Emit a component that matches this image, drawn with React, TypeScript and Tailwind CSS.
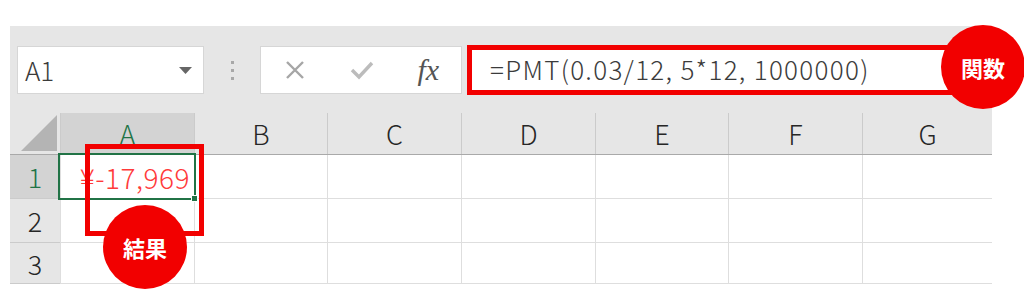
import React from 'react';

const cols = [
  { label: 'A', w: 'w-[134px]', active: true },
  { label: 'B', w: 'w-[133px]' },
  { label: 'C', w: 'w-[134px]' },
  { label: 'D', w: 'w-[134px]' },
  { label: 'E', w: 'w-[133px]' },
  { label: 'F', w: 'w-[134px]' },
  { label: 'G', w: 'w-[130px]' },
];

const rows = [
  { n: '1', h: 'h-[44px]', active: true },
  { n: '2', h: 'h-[44px]' },
  { n: '3', h: 'h-[41px]' },
];

const App: React.FC = () => {
  return (
    <div className="relative w-[1024px] h-[299px] bg-white overflow-hidden font-['Noto_Sans_CJK_JP','Noto_Sans',sans-serif]">
      <div className="pt-[26px] pl-[10px]">
        {/* Excel panel */}
        <div className="w-[982px] h-[258px] bg-[#e6e6e6] pt-[20px] flex flex-col overflow-hidden">
          {/* Formula toolbar */}
          <div className="flex items-stretch h-[48px] pl-[7px]">
            <div className="w-[187px] bg-white border border-[#d6d6d6] flex items-center justify-between pl-[7px] pr-[11px]">
              <span className="text-[26px] font-light text-[#3b3b3b] leading-none">A1</span>
              <svg width="13" height="7" viewBox="0 0 13 7">
                <polygon points="0,0 13,0 6.5,7" fill="#666" />
              </svg>
            </div>
            <div className="w-[56px] flex flex-col items-center justify-center gap-[5px]">
              <span className="w-[3px] h-[3px] bg-[#a8a8a8]" />
              <span className="w-[3px] h-[3px] bg-[#a8a8a8]" />
              <span className="w-[3px] h-[3px] bg-[#a8a8a8]" />
            </div>
            <div className="w-[202px] bg-white border border-[#d6d6d6] flex items-center">
              <div className="w-[68px] flex justify-center">
                <svg width="20" height="20" viewBox="0 0 20 20">
                  <path d="M2 2 L18 18 M18 2 L2 18" stroke="#a6a6a6" strokeWidth="2.4" fill="none" />
                </svg>
              </div>
              <div className="w-[68px] flex justify-center">
                <svg width="24" height="20" viewBox="0 0 24 20">
                  <path d="M2 10 L9 17 L22 3" stroke="#bcbcbc" strokeWidth="3.4" fill="none" />
                </svg>
              </div>
              <div className="w-[66px] flex justify-center">
                <span className="font-['Liberation_Serif',serif] italic text-[30px] text-[#555] leading-none">fx</span>
              </div>
            </div>
            <div className="flex-1 ml-[6px] bg-white flex items-center pl-[22px] pb-[3px]">
              <span className="text-[26px] font-light tracking-[1.3px] text-[#3b3b3b] leading-none">
                =PMT(0.03/12, 5*12, 1000000)
              </span>
            </div>
          </div>

          {/* Sheet grid */}
          <div className="mt-[19px] flex flex-col">
            <div className="flex h-[42px] border-b border-[#a9a9a9]">
              <div className="w-[50px] flex items-end justify-end pr-[3px] pb-[3px]">
                <svg width="36" height="36" viewBox="0 0 36 36">
                  <polygon points="0,36 36,36 36,0" fill="#b4b4b4" />
                </svg>
              </div>
              {cols.map((c) => (
                <div
                  key={c.label}
                  className={`${c.w} shrink-0 border-l border-[#cbcbcb] flex items-center justify-center text-[27px] font-light leading-none ${
                    c.active ? 'bg-[#d3d3d3] text-[#217346]' : 'text-[#262626]'
                  }`}
                >
                  {c.label}
                </div>
              ))}
            </div>
            {rows.map((r) => (
              <div key={r.n} className={`flex ${r.h}`}>
                <div
                  className={`w-[50px] shrink-0 border-b border-[#cbcbcb] flex items-center justify-center text-[27px] font-light leading-none ${
                    r.active ? 'bg-[#d3d3d3] text-[#217346]' : 'text-[#262626]'
                  }`}
                >
                  {r.n}
                </div>
                {cols.map((c) => (
                  <div key={c.label} className={`${c.w} shrink-0 bg-white border-l border-b border-[#dedede]`} />
                ))}
              </div>
            ))}
          </div>
        </div>
      </div>

      {/* Active cell A1 */}
      <div className="absolute left-[58px] top-[153px] w-[138px] h-[47px] border-2 border-[#217346] flex items-center justify-end pr-[4px]">
        <span className="text-[28px] font-light tracking-[0.5px] text-[#ff3a3a] leading-none">¥-17,969</span>
        <span className="absolute -right-[4px] -bottom-[4px] w-[7px] h-[7px] bg-[#217346] border border-white" />
      </div>

      {/* Annotations */}
      <div className="absolute left-[467px] top-[45px] w-[490px] h-[50px] border-[5px] border-[#f20000]" />
      <div className="absolute left-[941px] top-[25px] w-[84px] h-[84px] rounded-full bg-[#f20000] flex items-center justify-center">
        <span className="text-white font-bold text-[22px] leading-none">関数</span>
      </div>
      <div className="absolute left-[85px] top-[144px] w-[119px] h-[92px] border-[5px] border-[#f20000]" />
      <div className="absolute left-[103px] top-[205px] w-[84px] h-[84px] rounded-full bg-[#f20000] flex items-center justify-center">
        <span className="text-white font-bold text-[22px] leading-none">結果</span>
      </div>
    </div>
  );
};

export default App;
